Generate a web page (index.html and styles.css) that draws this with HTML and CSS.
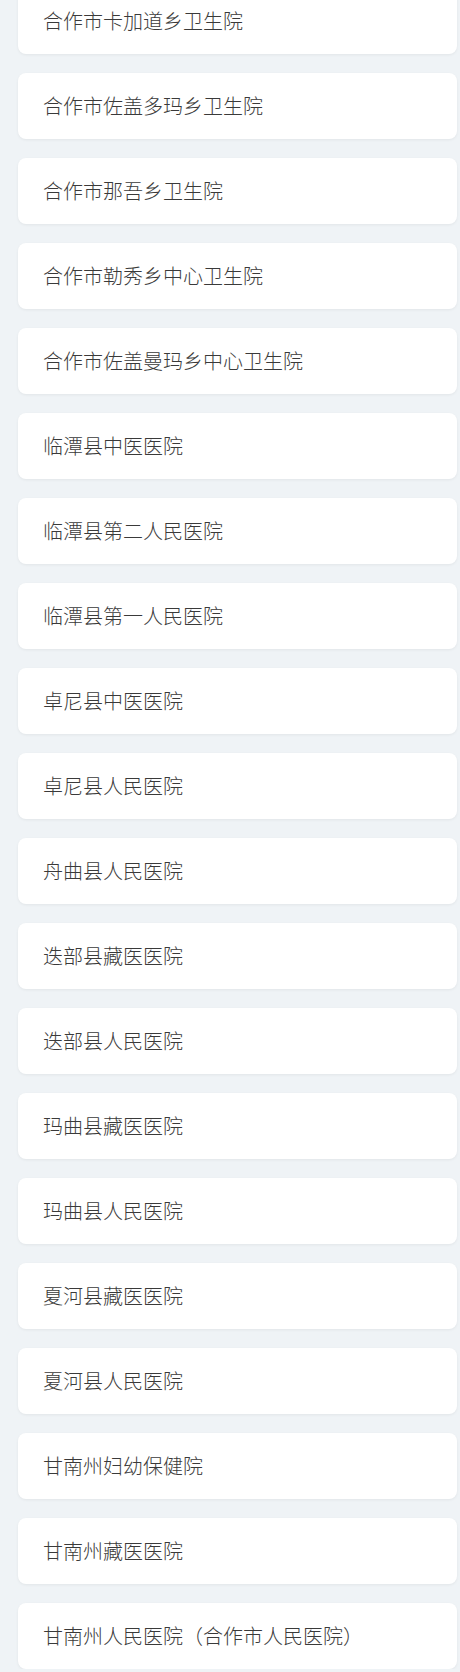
FILE: index.html
```html
<!DOCTYPE html>
<html lang="zh-CN">
<head>
<meta charset="utf-8">
<title>医院列表</title>
<link rel="stylesheet" href="styles.css">
</head>
<body>
<ul class="list">
  <li class="card">合作市卡加道乡卫生院</li>
  <li class="card">合作市佐盖多玛乡卫生院</li>
  <li class="card">合作市那吾乡卫生院</li>
  <li class="card">合作市勒秀乡中心卫生院</li>
  <li class="card">合作市佐盖曼玛乡中心卫生院</li>
  <li class="card">临潭县中医医院</li>
  <li class="card">临潭县第二人民医院</li>
  <li class="card">临潭县第一人民医院</li>
  <li class="card">卓尼县中医医院</li>
  <li class="card">卓尼县人民医院</li>
  <li class="card">舟曲县人民医院</li>
  <li class="card">迭部县藏医医院</li>
  <li class="card">迭部县人民医院</li>
  <li class="card">玛曲县藏医医院</li>
  <li class="card">玛曲县人民医院</li>
  <li class="card">夏河县藏医医院</li>
  <li class="card">夏河县人民医院</li>
  <li class="card">甘南州妇幼保健院</li>
  <li class="card">甘南州藏医医院</li>
  <li class="card">甘南州人民医院（合作市人民医院）</li>
</ul>
</body>
</html>
```
FILE: styles.css
```css
html, body {
  margin: 0;
  padding: 0;
  background: #eff3f6;
  overflow: hidden;
}
body {
  font-family: "Noto Sans CJK SC", "Noto Sans", sans-serif;
  color: #3a3a3a;
}
.list {
  list-style: none;
  margin: -12px 3px 0 18px;
  padding: 0;
  display: flex;
  flex-direction: column;
  gap: 19px;
}
.card {
  height: 66px;
  box-sizing: border-box;
  display: flex;
  align-items: center;
  padding-left: 25px;
  background: #ffffff;
  border-radius: 8px;
  box-shadow: 0 1px 3px rgba(0, 0, 0, 0.06);
  font-size: 20px;
  font-weight: 300;
  line-height: 1;
}
```
